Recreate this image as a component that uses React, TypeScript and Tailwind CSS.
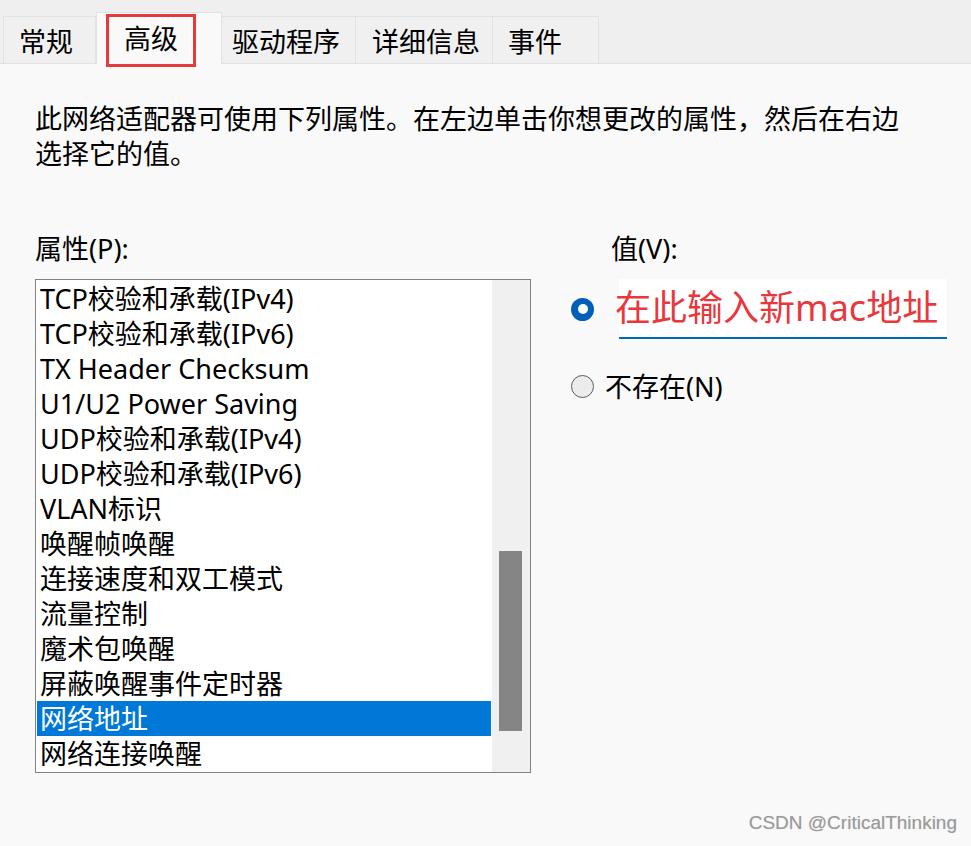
const tabs = [
  { label: "常规", width: "w-[93px]", pad: "pl-[15px]" },
  { label: "高级", width: "w-[126px]", pad: "", active: true },
  { label: "驱动程序", width: "w-[134px]", pad: "pl-[10px]" },
  { label: "详细信息", width: "w-[137px]", pad: "pl-[16px]" },
  { label: "事件", width: "w-[106px]", pad: "pl-[15px]" },
];

const props = [
  "TCP校验和承载(IPv4)",
  "TCP校验和承载(IPv6)",
  "TX Header Checksum",
  "U1/U2 Power Saving",
  "UDP校验和承载(IPv4)",
  "UDP校验和承载(IPv6)",
  "VLAN标识",
  "唤醒帧唤醒",
  "连接速度和双工模式",
  "流量控制",
  "魔术包唤醒",
  "屏蔽唤醒事件定时器",
  "网络地址",
  "网络连接唤醒",
];

export default function App() {
  return (
    <div className="relative w-[971px] h-[846px] overflow-hidden bg-[#f9f9f9] text-[27px] text-black font-['Noto_Sans','Noto_Sans_CJK_SC',sans-serif]">
      {/* Tab strip */}
      <div className="flex items-end h-[64px] pl-[3px] bg-[#efefef] border-b border-[#e2e2e2]">
        {tabs.map((t) =>
          t.active ? (
            <div
              key={t.label}
              className={`relative ${t.width} h-[52px] -mb-px bg-[#f9f9f9] border-x border-t border-[#e2e2e2]`}
            >
              <div className="absolute left-[9px] top-[1px] w-[90px] h-[53px] border-[3px] border-[#e5393c] flex items-center justify-center pb-[5px] leading-[35px]">
                {t.label}
              </div>
            </div>
          ) : (
            <div
              key={t.label}
              className={`${t.width} ${t.pad} h-[47px] flex items-center pt-[3px] leading-[35px] bg-[#f0f0f0] border-t border-r border-[#e2e2e2] first:border-l`}
            >
              {t.label}
            </div>
          )
        )}
      </div>

      {/* Body */}
      <div className="pl-[35px] pt-[37px]">
        <p className="leading-[35px]">
          此网络适配器可使用下列属性。在左边单击你想更改的属性，然后在右边
          <br />
          选择它的值。
        </p>

        <div className="flex mt-[60px]">
          {/* Left: properties */}
          <div className="w-[496px]">
            <div className="leading-[35px] mb-[13px]">属性(P):</div>
            <div className="flex h-[494px] border border-[#828282] bg-white">
              <ul className="flex-1 pl-px mr-px pt-px">
                {props.map((p) => (
                  <li
                    key={p}
                    className={`h-[35px] leading-[35px] pl-[3px] whitespace-nowrap ${
                      p === "网络地址" ? "bg-[#0078d7] text-white" : ""
                    }`}
                  >
                    {p}
                  </li>
                ))}
              </ul>
              <div className="w-[38px] bg-[#f0f0f0] pl-[7px] pt-[271px]">
                <div className="w-[23px] h-[180px] bg-[#858585]" />
              </div>
            </div>
          </div>

          {/* Right: value */}
          <div className="ml-[40px]">
            <div className="pl-[40px] leading-[35px] mb-[13px]">值(V):</div>
            <div className="flex items-center">
              <div className="w-[23px] h-[23px] rounded-full bg-[#005fb8] flex items-center justify-center">
                <div className="w-[10px] h-[10px] rounded-full bg-white" />
              </div>
              <div className="ml-[25px] w-[328px] h-[60px] bg-white border-b-2 border-[#0067c0] flex items-center">
                <span className="-ml-[4px] text-[36px] leading-none text-[#e8383d] whitespace-nowrap">
                  在此输入新mac地址
                </span>
              </div>
            </div>
            <div className="flex items-center mt-[30px] h-[35px]">
              <div className="w-[23px] h-[23px] rounded-full border border-[#5c5c5c] bg-[#ececec]" />
              <span className="ml-[11px] leading-[35px]">不存在(N)</span>
            </div>
          </div>
        </div>
      </div>

      {/* Watermark */}
      <div className="absolute right-[14px] bottom-[9px] text-[19px] text-[#9a9a9a] font-['Liberation_Sans',Arial,sans-serif] [text-shadow:0_0_1px_#d0d0d0]">
        CSDN @CriticalThinking
      </div>
    </div>
  );
}
